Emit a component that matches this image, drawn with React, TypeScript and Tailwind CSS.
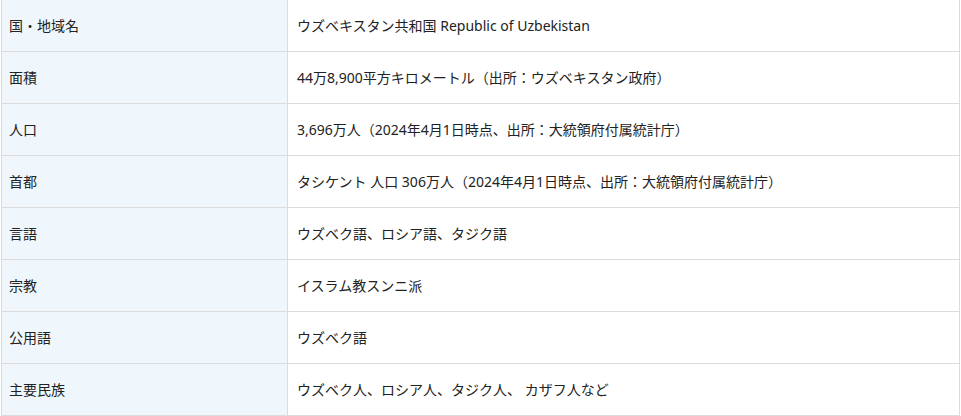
import React from 'react';

const rows: [string, string][] = [
  ['国・地域名', 'ウズベキスタン共和国 Republic of Uzbekistan'],
  ['面積', '44万8,900平方キロメートル（出所：ウズベキスタン政府）'],
  ['人口', '3,696万人（2024年4月1日時点、出所：大統領府付属統計庁）'],
  ['首都', 'タシケント 人口 306万人（2024年4月1日時点、出所：大統領府付属統計庁）'],
  ['言語', 'ウズベク語、ロシア語、タジク語'],
  ['宗教', 'イスラム教スンニ派'],
  ['公用語', 'ウズベク語'],
  ['主要民族', 'ウズベク人、ロシア人、タジク人、 カザフ人など'],
];

export default function App() {
  return (
    <div className="w-[961px] h-[416px] overflow-hidden bg-white">
      <div
        className="ml-[1px] w-[959px] border-l border-r border-[#dcdcdc] text-[14px] text-[#222]"
        style={{ fontFamily: '"Noto Sans", "Noto Sans CJK JP", sans-serif' }}
      >
        {rows.map(([label, value]) => (
          <div key={label} className="flex h-[52px] border-b border-[#dcdcdc]">
            <div className="w-[286px] shrink-0 flex items-center px-[7px] bg-[#f0f7fc] border-r border-[#dcdcdc]">
              {label}
            </div>
            <div className="flex-1 flex items-center px-[9px]">{value}</div>
          </div>
        ))}
      </div>
    </div>
  );
}
